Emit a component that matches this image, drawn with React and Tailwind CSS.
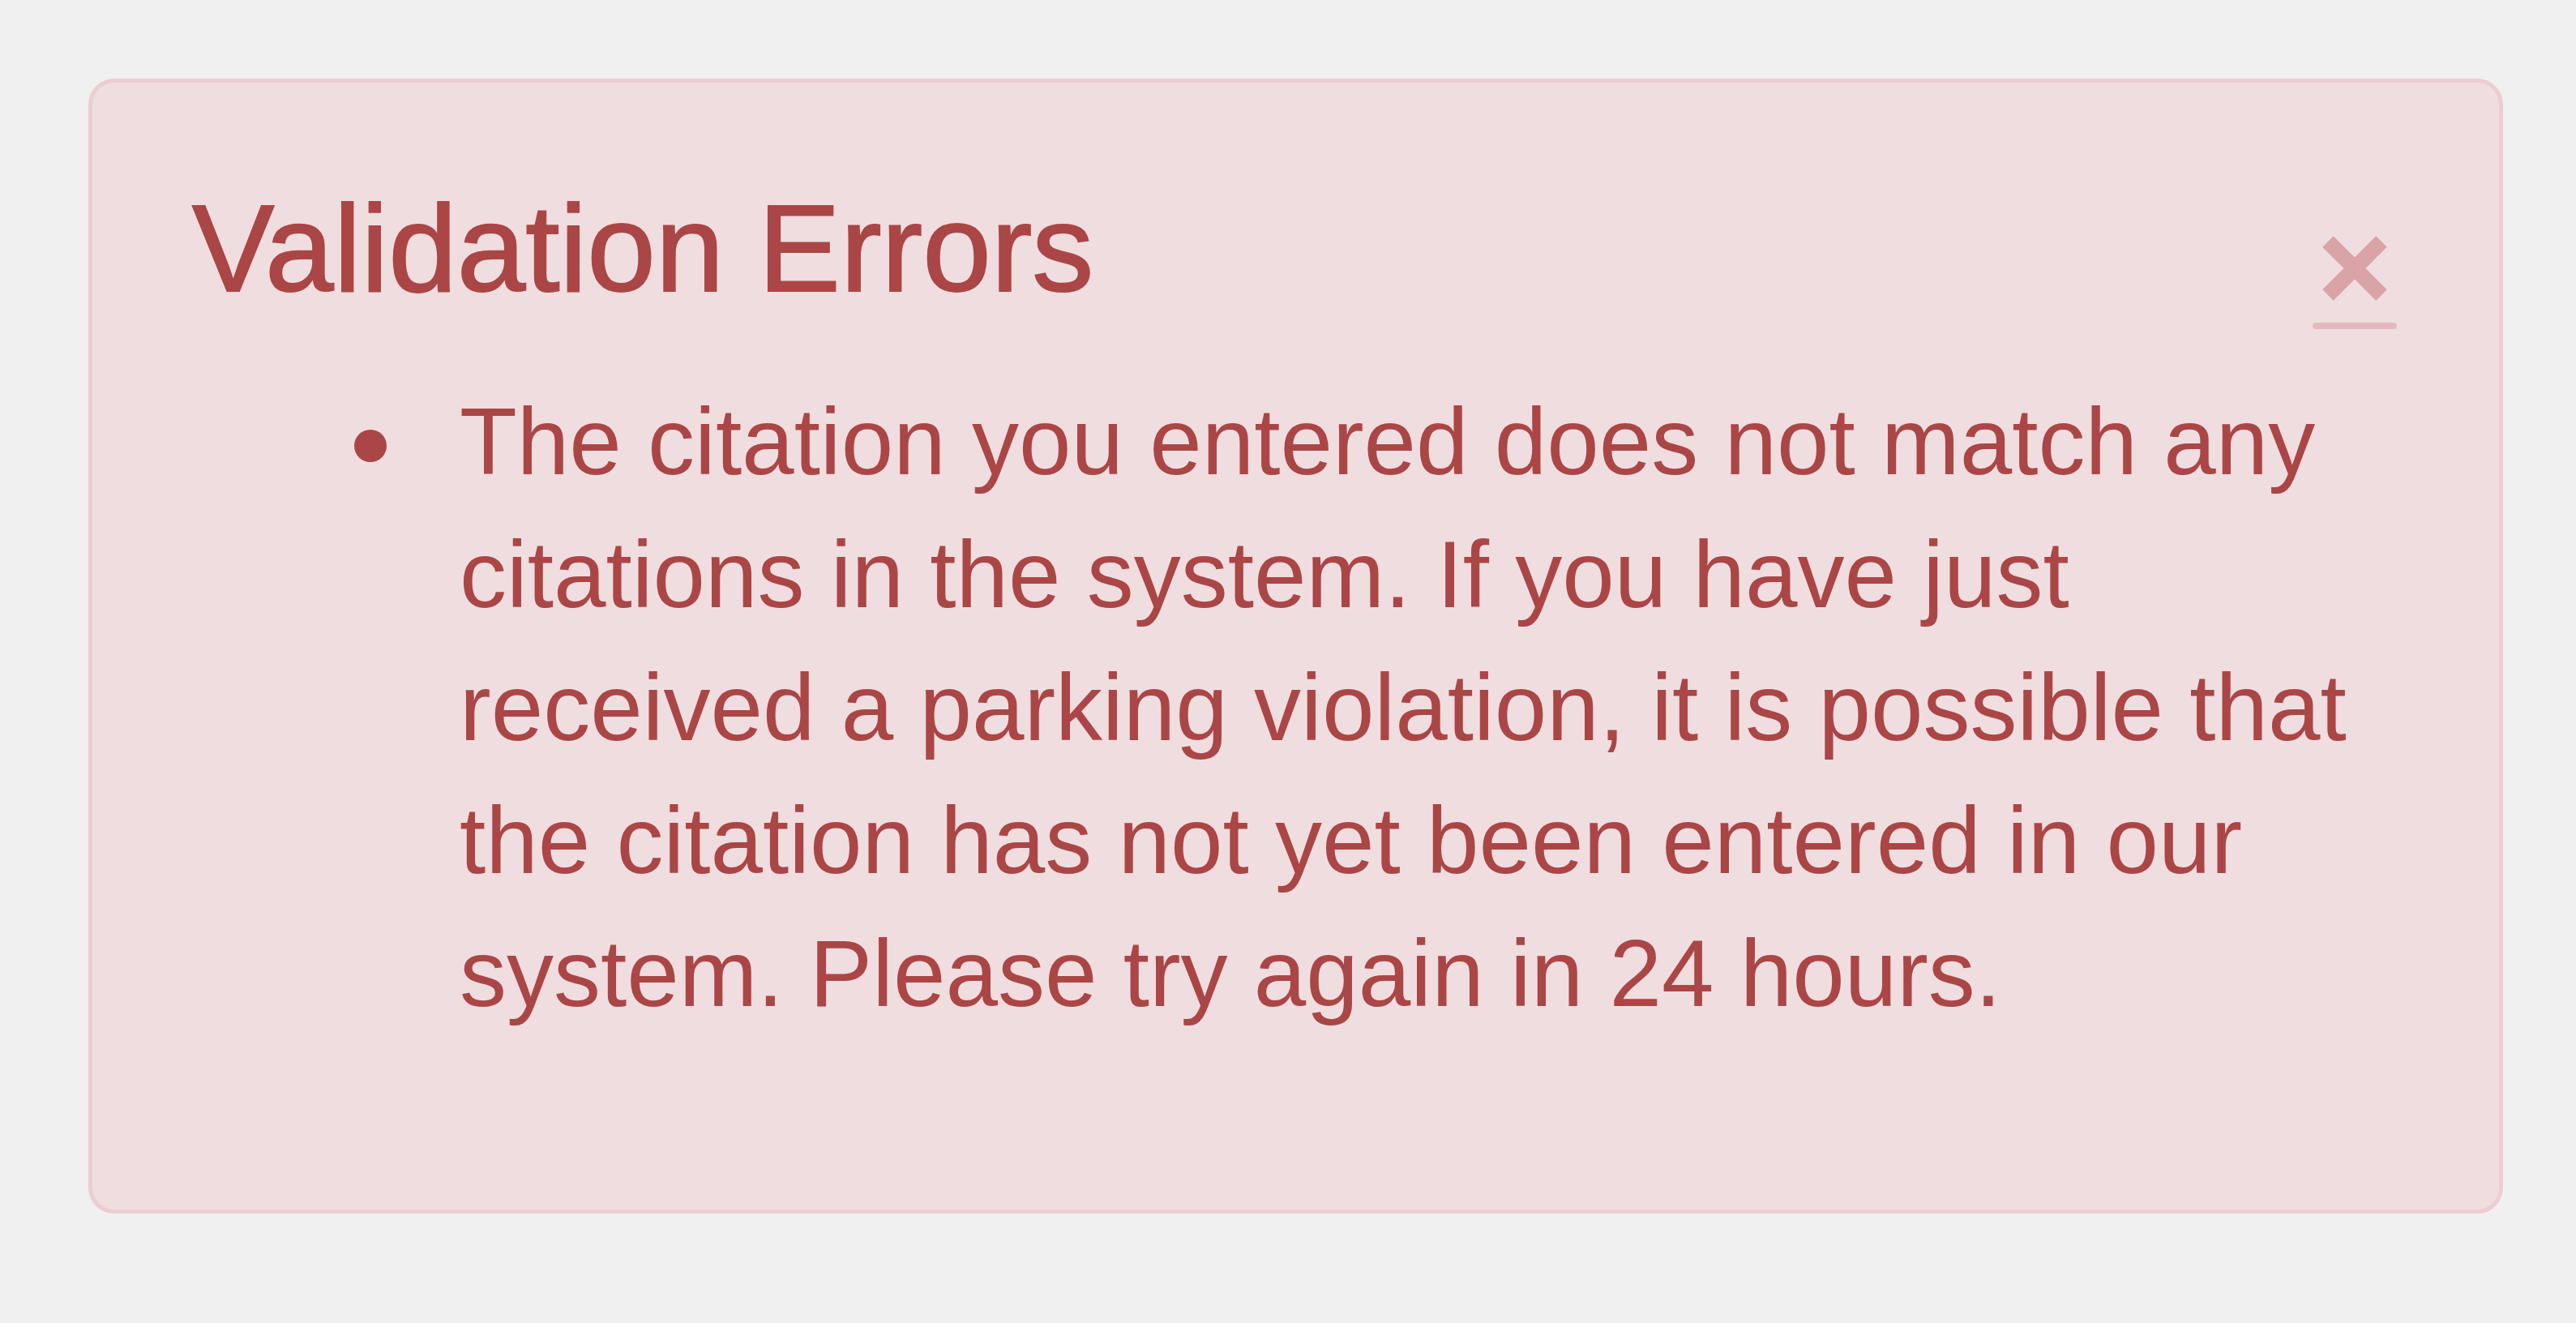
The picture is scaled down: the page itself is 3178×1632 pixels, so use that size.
export default function App() {
  return (
    <div className="w-[3178px] h-[1632px] bg-[#f0f0f0] pt-[97px] pl-[109px] font-['Liberation_Sans',Arial,sans-serif]">
      <div className="w-[2979px] h-[1400px] box-border rounded-[32px] border-[5px] border-[#ebcdd2] bg-[#f0dde0] pt-[123px] pl-[123px] pr-[126px] text-[#ab4646]">
        <div className="flex items-start">
          <h4 className="flex-1 m-0 text-[152px] leading-[163px] font-normal [-webkit-text-stroke:2px_#ab4646]">
            Validation Errors
          </h4>
          <div className="w-[104px] flex flex-col items-center mt-[65px]">
            <svg width="82" height="82" viewBox="0 0 82 82">
              <path d="M8 8 L74 74 M74 8 L8 74" stroke="#d9a3a7" strokeWidth="19" strokeLinecap="butt" fill="none" />
            </svg>
            <div className="w-[104px] h-[8px] mt-[26px] rounded-full bg-[#e4b9bd]" />
          </div>
        </div>
        <div className="flex mt-[57px]">
          <div className="w-[330px] shrink-0 flex">
            <div className="ml-[200px] mt-[67px] w-[40px] h-[40px] rounded-full bg-[#ab4646]" />
          </div>
          <p className="m-0 flex-1 text-[116px] leading-[164px]">
            The citation you entered does not match any citations in the system. If you have just received a parking violation, it is possible that the citation has not yet been entered in our system. Please try again in 24 hours.
          </p>
        </div>
      </div>
    </div>
  );
}
